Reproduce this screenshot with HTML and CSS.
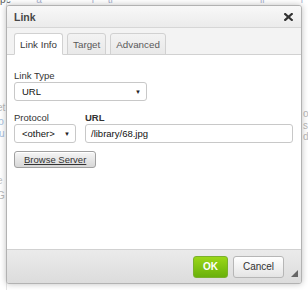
FILE: index.html
```html
<!DOCTYPE html>
<html lang="en">
<head>
  <meta charset="UTF-8" />
  <title>Link</title>
  <link rel="stylesheet" href="styles.css">
</head>
<body>
  <!-- page behind the dialog -->
  <div class="page">
    <p class="page-line"><span class="dark">pe</span><span class="faint">&nbsp;&nbsp;&nbsp;&nbsp;&nbsp;&nbsp;&nbsp;&nbsp;&nbsp;a&nbsp;&nbsp;&nbsp;&nbsp;&nbsp;&nbsp;&nbsp;&nbsp;&nbsp;&nbsp;&nbsp;&nbsp;&nbsp;&nbsp;&nbsp;&nbsp;&nbsp;&nbsp;i&nbsp;&nbsp;&nbsp;&nbsp;&nbsp;ti&nbsp;&nbsp;&nbsp;&nbsp;&nbsp;&nbsp;&nbsp;&nbsp;&nbsp;&nbsp;&nbsp;&nbsp;&nbsp;&nbsp;&nbsp;&nbsp;&nbsp;&nbsp;&nbsp;&nbsp;&nbsp;&nbsp;&nbsp;&nbsp;&nbsp;&nbsp;&nbsp;&nbsp;&nbsp;&nbsp;&nbsp;&nbsp;&nbsp;&nbsp;&nbsp;&nbsp;&nbsp;&nbsp;&nbsp;&nbsp;&nbsp;&nbsp;&nbsp;&nbsp;&nbsp;&nbsp;&nbsp;&nbsp;&nbsp;&nbsp;&nbsp;&nbsp;&nbsp;ll&nbsp;&nbsp;&nbsp;&nbsp;&nbsp;&nbsp;&nbsp;&nbsp;&nbsp;&nbsp;&nbsp;&nbsp;&nbsp;l</span></p>
    <div class="page-side left">
      <span class="ghost g1">et</span>
      <span class="ghost g2">lo</span>
      <span class="ghost g3">u</span>
      <span class="ghost g4">e</span>
      <span class="ghost g5">G</span>
    </div>
    <div class="page-side right">
      <span class="ghost r1">o</span>
      <span class="ghost r2">s</span>
      <span class="ghost r3">d</span>
    </div>
  </div>

  <div class="dlg">
    <div class="dlg-title">
      <span>Link</span>
      <svg class="dlg-close" width="9" height="8" viewBox="0 0 9 8">
        <path d="M1.2 1 L7.8 7 M7.8 1 L1.2 7" stroke="#333" stroke-width="2.2" stroke-linecap="square"/>
      </svg>
    </div>
    <div class="dlg-tabs">
      <span class="tab active">Link Info</span>
      <span class="tab">Target</span>
      <span class="tab">Advanced</span>
    </div>
    <div class="dlg-body">
      <div class="field">
        <label>Link Type</label>
        <div class="select wide"><span>URL</span><span class="arrow">&#9660;</span></div>
      </div>
      <div class="row">
        <div class="field">
          <label>Protocol</label>
          <div class="select small"><span>&lt;other&gt;</span><span class="arrow">&#9660;</span></div>
        </div>
        <div class="field grow">
          <label class="bold">URL</label>
          <div class="input">/library/68.jpg</div>
        </div>
      </div>
      <button class="browse">Browse Server</button>
    </div>
    <div class="dlg-footer">
      <button class="btn ok">OK</button>
      <button class="btn cancel">Cancel</button>
      <span class="grip"></span>
    </div>
  </div>
</body>
</html>
```

FILE: styles.css
```css
body {
  margin: 0;
  font-family: 'Liberation Sans', Arial, sans-serif;
  font-size: 9.5px;
  color: #333;
  background: #fff;
}

.page {
  position: relative;
  width: 308px;
  height: 290px;
  overflow: hidden;
}

.page-line {
  margin: -5px 0 0;
  font-size: 10px;
  line-height: 10px;
  white-space: nowrap;
}

.dark { color: #555; }
.faint { color: #a9b3d0; }

.page-side {
  position: absolute;
  top: 0;
  width: 6px;
  height: 290px;
}

.page-side.left {
  left: 0;
  border-right: 1px solid #e4e4e4;
}

.page-side.right {
  right: 0;
}

.ghost {
  position: absolute;
  color: #b8b8b8;
  font-size: 10px;
}

.g1 { top: 102px; left: -3px; }
.g2 { top: 116px; left: -4px; color: #a8bfe0; }
.g3 { top: 128px; left: -1px; color: #a8bfe0; }
.g4 { top: 175px; left: -3px; color: #c4c4c4; }
.g5 { top: 190px; left: -3px; }
.r1 { top: 108px; left: 1px; }
.r2 { top: 120px; left: 1px; }
.r3 { top: 131px; left: 1px; }

.dlg {
  position: absolute;
  left: 6px;
  top: 5px;
  width: 294px;
  height: 277px;
  display: flex;
  flex-direction: column;
  border: 1px solid #b2b2b2;
  border-radius: 3px;
  box-shadow: 0 0 6px rgba(0, 0, 0, 0.25);
  background: #f3f3f3;
  overflow: hidden;
}

.dlg-title {
  display: flex;
  justify-content: space-between;
  align-items: center;
  height: 21px;
  padding: 0 8px 0 7px;
  font-size: 10.5px;
  font-weight: bold;
  color: #474747;
  background: linear-gradient(#f8f8f8, #ebebeb);
  border-bottom: 1px solid #d6d6d6;
}

.dlg-close {
  display: block;
}

.dlg-tabs {
  display: flex;
  gap: 4px;
  padding: 5px 7px 0;
  height: 21px;
  border-bottom: 1px solid #d1d1d1;
  background: #f3f3f3;
}

.tab {
  display: flex;
  align-items: center;
  padding: 0 5px;
  margin-bottom: -1px;
  font-size: 9.8px;
  color: #595959;
  background: linear-gradient(#f3f3f3, #e9e9e9);
  border: 1px solid #d1d1d1;
  border-radius: 3px 3px 0 0;
}

.tab.active {
  background: #fff;
  border-bottom-color: #fff;
  color: #383838;
}

.dlg-body {
  flex: 1;
  background: #fff;
  padding: 15px 7px 0;
  display: flex;
  flex-direction: column;
  align-items: flex-start;
}

.field {
  display: flex;
  flex-direction: column;
  gap: 1px;
}

.field label {
  color: #333;
  line-height: 11px;
}

.field label.bold {
  font-weight: bold;
}

.select {
  display: flex;
  justify-content: space-between;
  align-items: center;
  height: 17px;
  padding: 0 5px 0 7px;
  border: 1px solid #c8c8c8;
  border-radius: 3px;
  background: #fff;
  color: #111;
}

.select.wide { width: 119px; }
.select.small { width: 48px; padding-left: 7px; }

.arrow {
  font-size: 6px;
  color: #222;
}

.row {
  display: flex;
  gap: 9px;
  margin-top: 11px;
  width: 279px;
}

.grow { flex: 1; }

.input {
  height: 17px;
  line-height: 17px;
  padding: 0 5px;
  border: 1px solid #c8c8c8;
  border-radius: 3px;
  color: #111;
}

.browse {
  margin-top: 8px;
  height: 17px;
  padding: 0 9px;
  font-family: inherit;
  font-size: 9.5px;
  color: #333;
  text-decoration: underline;
  background: linear-gradient(#f6f6f6, #d7d7d7);
  border: 1px solid #a0a0a0;
  border-radius: 3px;
  box-shadow: 0 1px 0 #fff inset;
}

.dlg-footer {
  position: relative;
  display: flex;
  justify-content: flex-end;
  align-items: center;
  gap: 5px;
  height: 33px;
  padding: 0 17px 0 0;
  background: linear-gradient(#ebebeb, #dcdcdc);
  border-top: 1px solid #d1d1d1;
}

.btn {
  height: 22px;
  font-family: inherit;
  font-size: 10px;
  font-weight: bold;
  border-radius: 3px;
  padding: 0;
}

.btn.ok {
  width: 35px;
  color: #fff;
  background: linear-gradient(#9ad717, #69b10b);
  border: 1px solid #7ab02c;
}

.btn.cancel {
  width: 51px;
  color: #333;
  font-weight: normal;
  background: linear-gradient(#fff, #e4e4e4);
  border: 1px solid #b6b6b6;
}

.grip {
  position: absolute;
  right: 3px;
  bottom: 6px;
  width: 0;
  height: 0;
  border-left: 7px solid transparent;
  border-bottom: 7px solid #666;
}
```
